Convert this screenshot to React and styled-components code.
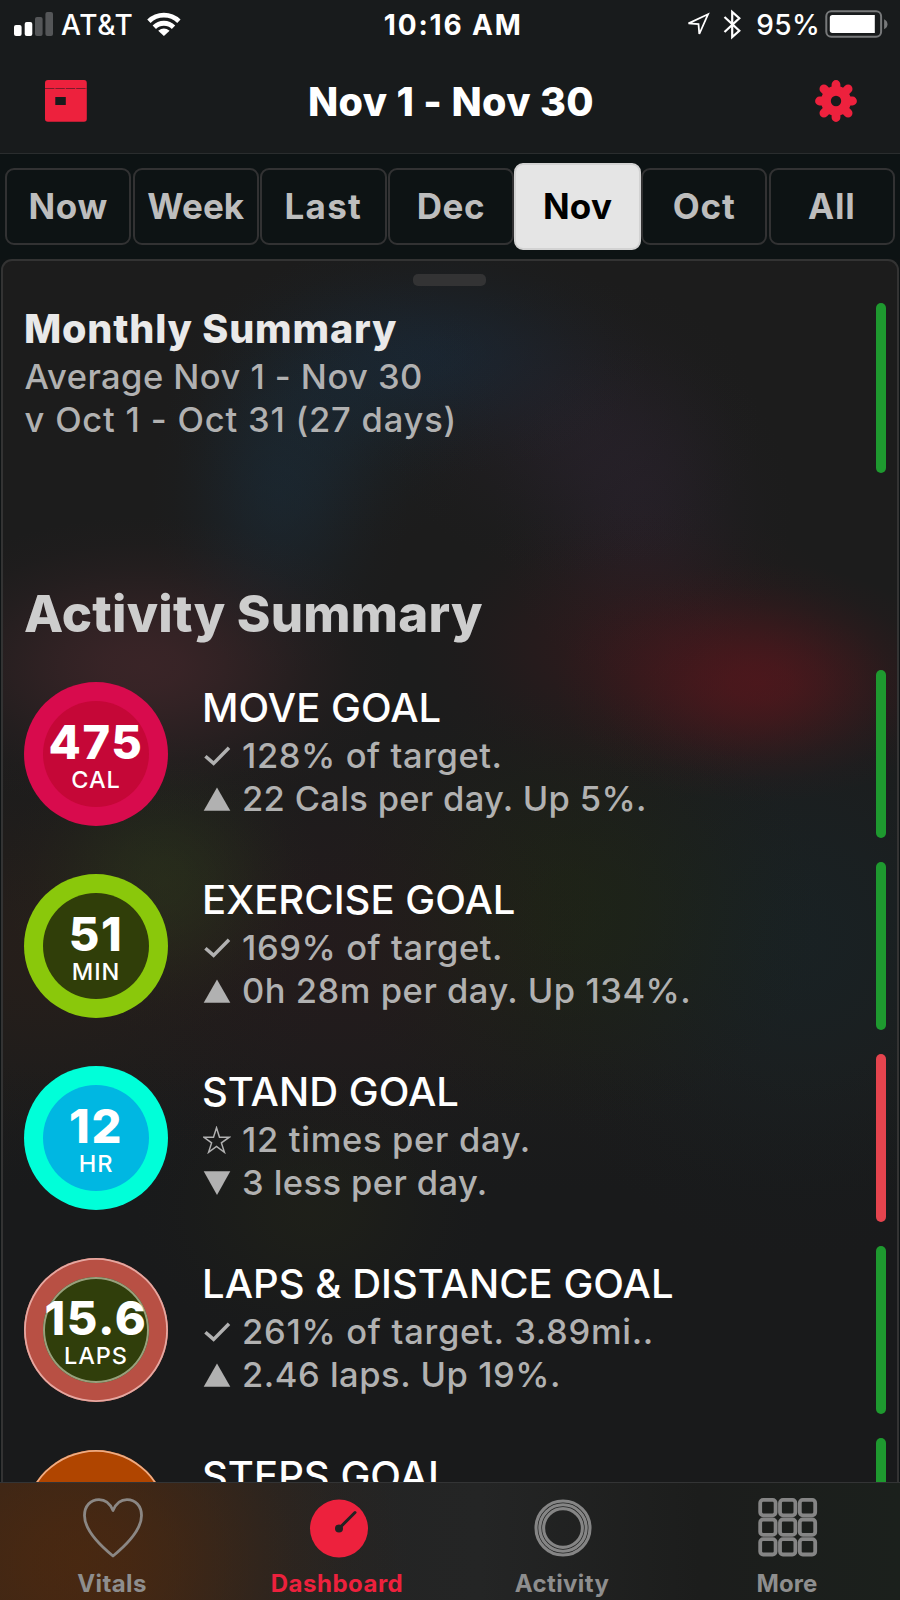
import React from 'react'
import styled, { createGlobalStyle } from 'styled-components'

const GlobalStyle = createGlobalStyle`
    *{
        box-sizing: border-box;
        margin: 0;
        padding: 0;
    }
    body{
        background: #0e1314;
        overflow: hidden;
    }
    svg{
        display: block;
        flex: none;
    }
`

// soft ellipse of colour behind the panel: radii, centre, rgb, strength
const glow = (rx, ry, x, y, rgb, a) => {
    const stops = [[1, 0], [0.93, 15], [0.75, 30], [0.5, 47], [0.25, 65], [0.08, 82], [0, 100]]
    return `radial-gradient(${rx}px ${ry}px at ${x}px ${y}px, ${stops.map(([k, at]) => `rgba(${rgb}, ${(a * k).toFixed(3)}) ${at}%`).join(', ')})`
}

const panelGlows = [
    glow(205, 120, 757, 422, '90, 22, 28', 0.72),
    glow(230, 150, 640, 390, '84, 22, 28', 0.34),
    glow(260, 150, 140, 405, '92, 46, 52', 0.46),
    glow(130, 180, 277, 235, '26, 52, 72', 0.36),
    glow(170, 150, 330, 145, '24, 52, 72', 0.26),
    glow(220, 120, 430, 95, '24, 50, 76', 0.38),
    glow(190, 150, 570, 165, '52, 40, 60', 0.26),
    glow(150, 170, 640, 250, '54, 38, 58', 0.3),
    glow(160, 150, 160, 620, '50, 70, 28', 0.36),
    glow(300, 220, 40, 690, '62, 36, 22', 0.28),
    glow(280, 240, 330, 690, '54, 24, 28', 0.26),
    glow(260, 230, 570, 650, '34, 46, 14', 0.36),
    glow(290, 320, 800, 680, '20, 42, 48', 0.36),
    glow(180, 140, 310, 950, '38, 40, 22', 0.36),
].join(', ')

const Screen = styled.div`
    width: 900px;
    height: 1600px;
    display: flex;
    flex-direction: column;
    overflow: hidden;
    font-family: Inter, 'Liberation Sans', sans-serif;
    white-space: nowrap;
    color: #fff;
`

const StatusBar = styled.div`
    flex: none;
    display: grid;
    grid-template-columns: 1fr auto 1fr;
    align-items: center;
    height: 50px;
    padding: 0 12.5px 0 14px;
    background: #181b1c;
    font-size: 28px;
    line-height: 50px;
    .carrier{
        display: flex;
        align-items: center;
        span{
            margin: 0 13px 0 7px;
            letter-spacing: .7px;
            font-weight: 500;
        }
    }
    .system{
        display: flex;
        align-items: center;
        justify-content: flex-end;
        span{
            margin: 0 4.5px 0 15px;
            letter-spacing: .3px;
            font-weight: 500;
        }
    }
`

const Clock = styled.p`
    font-weight: 700;
    letter-spacing: 1.85px;
    padding-left: 5px;
`

const Spacer = styled.i`
    width: 13px;
`

const Header = styled.header`
    flex: none;
    display: flex;
    justify-content: space-between;
    align-items: center;
    height: 104px;
    padding: 0 43px 0 45px;
    background: #181b1c;
    border-bottom: 1px solid #2a2d2e;
    svg{
        margin-bottom: 2px;
    }
    h1{
        font-size: 39.5px;
        font-weight: 800;
        letter-spacing: .4px;
    }
`

const Ranges = styled.nav`
    flex: none;
    display: flex;
    align-items: center;
    gap: 1.3px;
    height: 105px;
    padding: 0 5px;
    background: #0d1314;
`

const Range = styled.button`
    flex: 1 1 0;
    min-width: 0;
    height: ${({ $active }) => ($active ? '87px' : '77px')};
    margin: ${({ $active }) => ($active ? '0 -1px' : '0')};
    padding-bottom: 2px;
    border: 2px solid ${({ $active }) => ($active ? '#d2d2d2' : '#323233')};
    border-radius: 9px;
    background: ${({ $active }) => ($active ? '#e5e5e5' : 'transparent')};
    color: ${({ $active }) => ($active ? '#000' : '#bdbdbd')};
    font-family: inherit;
    font-size: 35px;
    font-weight: 700;
    letter-spacing: ${({ $track }) => $track || 0}px;
`

const Panel = styled.main`
    flex: 1;
    min-height: 0;
    overflow: hidden;
    margin: 0 1px;
    border: 2px solid #333;
    border-bottom: none;
    border-radius: 11px 11px 0 0;
    padding: 13px 11px 0 21px;
    background: ${panelGlows}, linear-gradient(#1c1c1c 0, #1c1c1c 800px, #191a1b 930px);
`

const Handle = styled.div`
    width: 73px;
    height: 12px;
    margin: 0 auto 17px 389px;
    border-radius: 5px;
    background: #333334;
`

const Entry = styled.section`
    display: flex;
    justify-content: space-between;
    height: ${({ $height }) => $height}px;
    margin-bottom: ${({ $gap }) => $gap}px;
`

const Trend = styled.div`
    width: 10px;
    border-radius: 5px;
    background: ${({ $down }) => ($down ? '#e5444e' : '#1e992f')};
`

const Summary = styled.div`
    padding-top: 2px;
    h2{
        font-size: 39.5px;
        font-weight: 800;
        line-height: 48px;
        letter-spacing: .8px;
        color: #e9e9e9;
        margin-bottom: 2px;
    }
    p{
        padding-left: .5px;
    }
`

const Line = styled.p`
    display: flex;
    align-items: center;
    gap: 11.5px;
    height: 43.3px;
    font-size: 34.5px;
    font-weight: 500;
    line-height: 43.3px;
    letter-spacing: ${({ $track }) => $track || 0}px;
    color: #b1b1b1;
`

const SectionTitle = styled.h2`
    height: 60px;
    margin: 0 0 26px;
    font-size: 51px;
    font-weight: 800;
    line-height: 60px;
    letter-spacing: .2px;
    color: #cdcdcd;
`

const GoalBody = styled.div`
    display: flex;
    gap: 34px;
    padding-top: 12px;
`

const Ring = styled.div`
    flex: none;
    width: 144px;
    height: 144px;
    border-radius: 50%;
    background: ${({ $outer }) => $outer};
    box-shadow: inset 0 0 0 1.8px ${({ $edge }) => $edge || 'transparent'};
    padding: 19px;
    .inner{
        width: 106px;
        height: 106px;
        border-radius: 50%;
        background: ${({ $inner }) => $inner};
        box-shadow: inset 0 0 0 2px ${({ $innerEdge }) => $innerEdge || 'transparent'};
        display: flex;
        flex-direction: column;
        align-items: center;
        padding-top: 16px;
    }
    b{
        font-size: 47px;
        font-weight: 800;
        line-height: 50px;
        letter-spacing: 1.6px;
    }
    small{
        font-size: 23.5px;
        font-weight: 500;
        line-height: 26px;
        letter-spacing: .9px;
    }
`

const GoalText = styled.div`
    padding-top: 1.5px;
    h3{
        height: 48px;
        margin-bottom: 2.7px;
        font-size: 40px;
        font-weight: 500;
        line-height: 48px;
        letter-spacing: .03px;
    }
    p{
        padding-left: .5px;
    }
`

const Footer = styled.footer`
    flex: none;
    display: flex;
    height: 118px;
    border-top: 1px solid #333435;
    background:
        ${glow(330, 290, 80, 80, '84, 42, 12', 0.72)},
        linear-gradient(90deg, #2d241e 0, #232323 260px, #242525 480px, #1c1d1c 700px, #1b201c 900px);
`

const FooterTab = styled.a`
    flex: 1;
    display: flex;
    flex-direction: column;
    align-items: center;
    padding-top: 14.5px;
    font-size: 24px;
    font-weight: 700;
    color: ${({ $active }) => ($active ? '#ed213d' : '#8e8e8e')};
    span{
        margin: 11.5px 1px 0 0;
        line-height: 30px;
        letter-spacing: ${({ $track }) => $track}px;
    }
`

const SignalIcon = () => (
    <svg width="40" height="50" viewBox="14 0 40 50">
        <rect x="14" y="25" width="7.6" height="11" rx="2" fill="#fff" />
        <rect x="24.7" y="22" width="7.6" height="14" rx="2" fill="#fff" />
        <rect x="35" y="17" width="7.6" height="19" rx="2" fill="#545658" />
        <rect x="45.4" y="12" width="7.6" height="24" rx="2" fill="#545658" />
    </svg>
)

const WifiIcon = () => (
    <svg width="34" height="50" viewBox="146.5 0 34 50" fill="none" stroke="#fff" strokeWidth="4.8">
        <path d="M148.4 21.2A21.5 21.5 0 0 1 178.4 21.2" />
        <path d="M153.8 27.2A13.6 13.6 0 0 1 173 27.2" />
        <path d="M157.7 30.8Q163.4 26 169.1 30.8L163.4 36Z" fill="#fff" stroke="none" />
    </svg>
)

const LocationIcon = () => (
    <svg width="25" height="50" viewBox="686 0 25 50">
        <path d="M709 14.3L689.5 23.4L699.5 24L700.3 34Z" fill="none" stroke="#fff" strokeWidth="1.8" />
    </svg>
)

const BluetoothIcon = () => (
    <svg width="18" height="50" viewBox="724 0 18 50">
        <path d="M725.5 17L740.3 30.8L733.2 37V12L740.3 18.2L725.5 32" fill="none" stroke="#fff" strokeWidth="2.2" />
    </svg>
)

const BatteryIcon = () => (
    <svg width="63" height="50" viewBox="825.5 0 63 50">
        <rect x="826.8" y="11.3" width="54.8" height="25.4" rx="5" fill="none" stroke="#77797a" strokeWidth="2" />
        <path d="M833 15H875.3V33H833Q830.3 33 830.3 30.3V17.7Q830.3 15 833 15Z" fill="#fff" />
        <path d="M884.6 19.3Q888 21 888 24.3T884.6 29.3Z" fill="#77797a" />
    </svg>
)

const CalendarIcon = () => (
    <svg width="42" height="42" viewBox="0 0 42 42">
        <path d="M3 0H39Q41.8 0 41.8 3V39Q41.8 41.8 39 41.8H3Q0 41.8 0 39V3Q0 0 3 0ZM10.3 17V25H20.8V17Z" fill="#ed213d" fillRule="evenodd" />
        <path d="M0 8.5H42" stroke="#7a1c2b" strokeWidth="1" strokeDasharray="9.4 1" />
    </svg>
)

const GearIcon = () => (
    <svg width="42" height="42" viewBox="-21 -21 42 42">
        <circle r="15" fill="#ed213d" />
        <path d="M0-16.5V16.5M-16.5 0H16.5M-12.1-12.1L12.1 12.1M12.1-12.1L-12.1 12.1" stroke="#ed213d" strokeWidth="8.8" strokeLinecap="round" />
        <circle r="5.2" fill="#181b1c" />
    </svg>
)

const marks = {
    check: <path d="M2.4 14.2L10.6 21.4L26 5.7" fill="none" stroke="#b1b1b1" strokeWidth="3.5" />,
    up: <path d="M14 2.5L27.3 25.8H.7Z" fill="#b1b1b1" />,
    down: <path d="M14 26L27.3 2.3H.7Z" fill="#b1b1b1" />,
    star: <path d="M13.5 1.8L16.5 11.2L26.3 11.2L18.4 16.9L21.4 26.3L13.5 20.5L5.6 26.3L8.6 16.9L.7 11.2L10.5 11.2Z" fill="none" stroke="#b1b1b1" strokeWidth="1.5" />,
}

const HeartIcon = () => (
    <svg width="60" height="60" viewBox="0 0 60 60">
        <path d="M30 12.5C27 5.2 21.5 1.6 16 1.6C7.5 1.6 1.5 8 1.5 17.5C1.5 30 13 44 30 58C47 44 58.5 30 58.5 17.5C58.5 8 52.5 1.6 44 1.6C38.5 1.6 33 5.2 30 12.5Z" fill="none" stroke="#8b8784" strokeWidth="2.8" strokeLinejoin="round" />
    </svg>
)

const GaugeIcon = () => (
    <svg width="60" height="60" viewBox="0 0 60 60">
        <circle cx="31" cy="30.5" r="29" fill="#ed213d" />
        <circle cx="31" cy="30.5" r="4" fill="#222" />
        <path d="M31 30.5L47 14.5" stroke="#222" strokeWidth="3" strokeLinecap="round" />
    </svg>
)

const RingsIcon = () => (
    <svg width="60" height="60" viewBox="0 0 60 60" fill="none" stroke="#858585" strokeWidth="3.1">
        <circle cx="30" cy="30" r="27" />
        <circle cx="30" cy="30" r="23.2" />
        <circle cx="30" cy="30" r="19.4" />
    </svg>
)

const GridIcon = () => (
    <svg width="60" height="60" viewBox="0 0 60 60" fill="none" stroke="#858585" strokeWidth="3.8">
        {[0, 1, 2].map(r => [0, 1, 2].map(c => (
            <rect key={`${r}${c}`} x={2.2 + c * 19.8} y={1.9 + r * 19.6} width="15.4" height="15.4" rx="3" />
        )))}
    </svg>
)

const ranges = [
    { name: 'Now', track: 0.6 },
    { name: 'Week', track: 0.1 },
    { name: 'Last', track: 1.3 },
    { name: 'Dec', track: 0.6 },
    { name: 'Nov', track: 0.3, active: true },
    { name: 'Oct', track: 0.9 },
    { name: 'All', track: 0.9 },
]

const goals = [
    {
        title: 'MOVE GOAL', value: '475', unit: 'CAL', outer: '#d80b4d', inner: '#c50737',
        lines: [['check', '128% of target.', 0.58], ['up', '22 Cals per day. Up 5%.', 0.32]],
    },
    {
        title: 'EXERCISE GOAL', value: '51', unit: 'MIN', outer: '#8ac80b', inner: '#303e09',
        lines: [['check', '169% of target.', 0.58], ['up', '0h 28m per day. Up 134%.', 0.53]],
    },
    {
        title: 'STAND GOAL', value: '12', unit: 'HR', outer: '#00ffd9', inner: '#00b7e2', down: true,
        lines: [['star', '12 times per day.', 0.69], ['down', '3 less per day.', 0.41]],
    },
    {
        title: 'LAPS & DISTANCE GOAL', value: '15.6', unit: 'LAPS', outer: '#b85044', inner: '#303e0b',
        edge: '#e5a8a1', innerEdge: '#98a07c',
        lines: [['check', '261% of target. 3.89mi..', 0.71], ['up', '2.46 laps. Up 19%.', 0.52]],
    },
    { title: 'STEPS GOAL', outer: '#b04500', inner: '#b04500', edge: '#efac83', lines: [] },
]

const tabs = [
    { name: 'Vitals', icon: <HeartIcon />, track: 0.4 },
    { name: 'Dashboard', icon: <GaugeIcon />, track: 0.5 },
    { name: 'Activity', icon: <RingsIcon />, track: 0.4 },
    { name: 'More', icon: <GridIcon />, track: 0.1 },
]

function Goal({ goal }) {
    return (
        <Entry $height={168} $gap={24}>
            <GoalBody>
                <Ring $outer={goal.outer} $inner={goal.inner} $edge={goal.edge} $innerEdge={goal.innerEdge}>
                    {goal.value && (
                        <div className="inner">
                            <b>{goal.value}</b>
                            <small>{goal.unit}</small>
                        </div>
                    )}
                </Ring>
                <GoalText>
                    <h3>{goal.title}</h3>
                    {goal.lines.map(([mark, text, track]) => (
                        <Line key={text} $track={track}>
                            <svg width="28" height="28" viewBox="0 0 28 28">{marks[mark]}</svg>
                            {text}
                        </Line>
                    ))}
                </GoalText>
            </GoalBody>
            <Trend $down={goal.down} />
        </Entry>
    )
}

function App() {
    return (
        <Screen>
            <GlobalStyle />
            <StatusBar>
                <div className="carrier">
                    <SignalIcon />
                    <span>AT&amp;T</span>
                    <WifiIcon />
                </div>
                <Clock>10:16 AM</Clock>
                <div className="system">
                    <LocationIcon />
                    <Spacer />
                    <BluetoothIcon />
                    <span>95%</span>
                    <BatteryIcon />
                </div>
            </StatusBar>

            <Header>
                <CalendarIcon />
                <h1>Nov 1 - Nov 30</h1>
                <GearIcon />
            </Header>

            <Ranges>
                {ranges.map(r => <Range key={r.name} $active={r.active} $track={r.track}>{r.name}</Range>)}
            </Ranges>

            <Panel>
                <Handle />
                <Entry $height={170} $gap={111}>
                    <Summary>
                        <h2>Monthly Summary</h2>
                        <Line $track={0.45}>Average Nov 1 - Nov 30</Line>
                        <Line $track={0.8}>v Oct 1 - Oct 31 (27 days)</Line>
                    </Summary>
                    <Trend />
                </Entry>
                <SectionTitle>Activity Summary</SectionTitle>
                {goals.map(g => <Goal key={g.title} goal={g} />)}
            </Panel>

            <Footer>
                {tabs.map(t => (
                    <FooterTab key={t.name} $active={t.name === 'Dashboard'} $track={t.track}>
                        {t.icon}
                        <span>{t.name}</span>
                    </FooterTab>
                ))}
            </Footer>
        </Screen>
    )
}

export default App
